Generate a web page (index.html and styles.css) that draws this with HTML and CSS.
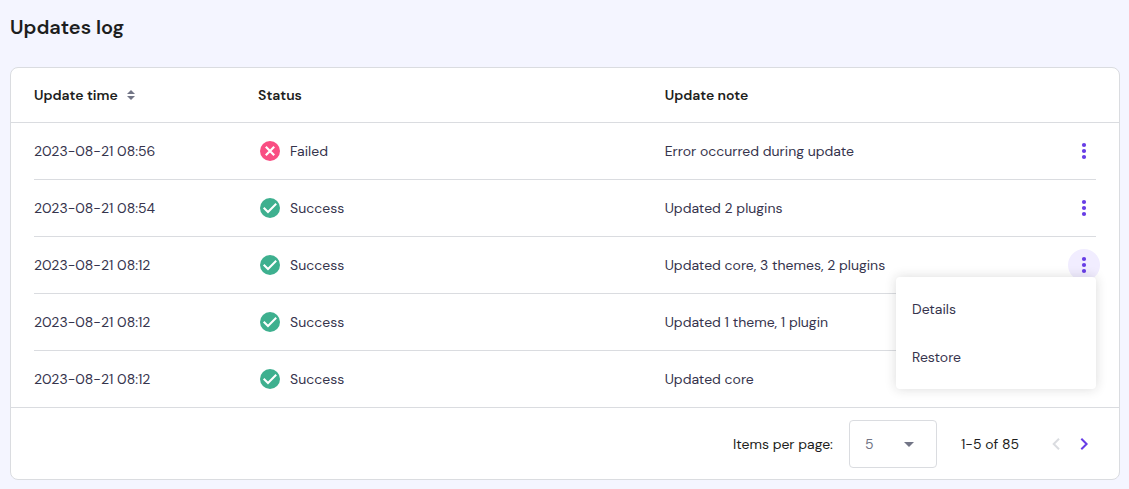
FILE: index.html
```html
<!DOCTYPE html>
<html lang="en">
<head>
  <meta charset="UTF-8" />
  <meta name="viewport" content="width=device-width, initial-scale=1" />
  <title>Updates log</title>
  <link rel="stylesheet" href="styles.css">
</head>
<body>

  <!-- shared icons -->
  <svg class="sprite" aria-hidden="true">
    <symbol id="icon-success" viewBox="0 0 24 24">
      <circle cx="12" cy="12" r="10" fill="#3eb08f" />
      <path d="M5.7 11.7l4.3 4.3 8.200-8.200" fill="none" stroke="#fff" stroke-width="2" />
    </symbol>
    <symbol id="icon-failed" viewBox="0 0 24 24">
      <circle cx="12" cy="12" r="10" fill="#f94e83" />
      <path d="M7.8 7.8l8.4 8.4M16.2 7.8l-8.4 8.4" fill="none" stroke="#fff" stroke-width="2.2" />
    </symbol>
    <symbol id="icon-dots" viewBox="0 0 24 24">
      <circle cx="12" cy="6" r="2.1" />
      <circle cx="12" cy="12" r="2.1" />
      <circle cx="12" cy="18" r="2.1" />
    </symbol>
  </svg>

  <h1 class="title">Updates log</h1>

  <div class="card">
    <table class="log">
      <thead>
        <tr>
          <th class="col-time" aria-sort="none">
            <button class="sort" type="button">
              Update time
              <svg width="10" height="10" viewBox="0 0 10 10" aria-hidden="true"><path d="M1 4l4-4 4 4zM1 6l4 4 4-4z" /></svg>
            </button>
          </th>
          <th class="col-status">Status</th>
          <th>Update note</th>
          <th class="col-actions" aria-label="Actions"></th>
        </tr>
      </thead>
      <tbody>
        <tr>
          <td>2023-08-21 08:56</td>
          <td><span class="status"><svg class="icon"><use href="#icon-failed" /></svg>Failed</span></td>
          <td>Error occurred during update</td>
          <td><button class="more" type="button" aria-label="More"><svg class="icon"><use href="#icon-dots" /></svg></button></td>
        </tr>
        <tr>
          <td>2023-08-21 08:54</td>
          <td><span class="status"><svg class="icon"><use href="#icon-success" /></svg>Success</span></td>
          <td>Updated 2 plugins</td>
          <td><button class="more" type="button" aria-label="More"><svg class="icon"><use href="#icon-dots" /></svg></button></td>
        </tr>
        <tr>
          <td>2023-08-21 08:12</td>
          <td><span class="status"><svg class="icon"><use href="#icon-success" /></svg>Success</span></td>
          <td>Updated core, 3 themes, 2 plugins</td>
          <td>
            <div class="dropdown">
              <button class="more open" type="button" aria-label="More" aria-expanded="true"><svg class="icon"><use href="#icon-dots" /></svg></button>
              <div class="menu" role="menu">
                <button class="menu-item" type="button" role="menuitem">Details</button>
                <button class="menu-item" type="button" role="menuitem">Restore</button>
              </div>
            </div>
          </td>
        </tr>
        <tr>
          <td>2023-08-21 08:12</td>
          <td><span class="status"><svg class="icon"><use href="#icon-success" /></svg>Success</span></td>
          <td>Updated 1 theme, 1 plugin</td>
          <td><button class="more" type="button" aria-label="More"><svg class="icon"><use href="#icon-dots" /></svg></button></td>
        </tr>
        <tr>
          <td>2023-08-21 08:12</td>
          <td><span class="status"><svg class="icon"><use href="#icon-success" /></svg>Success</span></td>
          <td>Updated core</td>
          <td><button class="more" type="button" aria-label="More"><svg class="icon"><use href="#icon-dots" /></svg></button></td>
        </tr>
      </tbody>
    </table>

    <div class="pagination">
      <label for="perPage">Items per page:</label>
      <div class="select">
        <select id="perPage">
          <option>5</option>
          <option>10</option>
          <option>25</option>
        </select>
        <svg class="arrow" width="10" height="5" viewBox="0 0 10 5" aria-hidden="true"><path d="M0 0h10L5 5z" /></svg>
      </div>
      <span class="range">1-5 of 85</span>
      <div class="pager">
        <button type="button" aria-label="Previous page" disabled>
          <svg class="icon" viewBox="0 0 24 24"><path d="M15 6.7L9.7 12l5.3 5.3" /></svg>
        </button>
        <button type="button" aria-label="Next page">
          <svg class="icon" viewBox="0 0 24 24"><path d="M9.3 6.7l5.3 5.3-5.3 5.3" /></svg>
        </button>
      </div>
    </div>
  </div>

</body>
</html>
```

FILE: styles.css
```css
* {
  box-sizing: border-box;
}
body {
  font-family: "DM Sans", Inter, sans-serif;
  font-size: 14px;
  line-height: 24px;
  background: #f4f5ff;
  color: #36344d;
  margin: 0;
  padding: 11px 9px 9px 10px;
}
button, select {
  font: inherit;
  color: inherit;
  background: none;
  border: none;
  margin: 0;
  padding: 0;
  cursor: pointer;
}
.sprite {
  display: none;
}
.icon {
  display: block;
  width: 24px;
  height: 24px;
}
.title {
  margin: 0 0 24px;
  font-size: 20px;
  line-height: 32px;
  font-weight: 600;
  color: #1d1e20;
}
.card {
  background: #fff;
  border: 1px solid #dadce0;
  border-radius: 8px;
}

/* table */
.log {
  width: 100%;
  table-layout: fixed;
  border-collapse: separate;
  border-spacing: 0;
}
.log th, .log td {
  padding: 0;
  text-align: left;
}
.log th {
  height: 55px;
  border-bottom: 1px solid #dadce0;
  font-weight: 600;
  color: #1d1e20;
}
.log td {
  height: 57px;
  padding-bottom: 1px;
}
.log th:first-child, .log td:first-child {
  padding-left: 23px;
}
.log tbody tr {
  background: linear-gradient(#dadce0, #dadce0) no-repeat center bottom / calc(100% - 46px) 1px;
}
.log tbody tr:last-child {
  background: none;
}
.log tbody tr:last-child td {
  height: 56px;
  padding-bottom: 0;
}
.col-time {
  width: 22.3%;
}
.col-status {
  width: 36.7%;
}
.col-actions {
  width: 51px;
}
.sort {
  display: flex;
  align-items: center;
  gap: 8px;
}
.sort svg {
  fill: #727586;
}
.status {
  display: flex;
  align-items: center;
  gap: 8px;
}

/* row menu */
.more {
  display: flex;
  align-items: center;
  justify-content: center;
  width: 32px;
  height: 32px;
  border-radius: 50%;
  fill: #673de6;
}
.more.open {
  background: #f1edff;
}
.dropdown {
  position: relative;
  width: 32px;
}
.menu {
  position: absolute;
  top: 28px;
  right: 4px;
  z-index: 1;
  width: 200px;
  padding: 8px 0;
  background: #fff;
  border-radius: 4px;
  box-shadow: 0 0 12px rgba(29, 30, 32, 0.16);
}
.menu-item {
  display: block;
  width: 100%;
  padding: 12px 16px;
  text-align: left;
}

/* pagination */
.pagination {
  display: flex;
  align-items: center;
  justify-content: flex-end;
  padding: 12px 23px 11px;
  border-top: 1px solid #dadce0;
  color: #1d1e20;
}
.select {
  position: relative;
  margin: 0 24px 0 16px;
}
.select select {
  display: block;
  appearance: none;
  width: 88px;
  height: 48px;
  padding: 0 15px;
  border: 1px solid #dadce0;
  border-radius: 4px;
  color: #727586;
}
.arrow {
  position: absolute;
  top: 22px;
  right: 23px;
  fill: #727586;
  pointer-events: none;
}
.pager {
  display: flex;
  gap: 4px;
  margin-left: 25px;
}
.pager path {
  fill: none;
  stroke: #673de6;
  stroke-width: 2;
}
.pager button:disabled path {
  stroke: #dadce0;
}
```
